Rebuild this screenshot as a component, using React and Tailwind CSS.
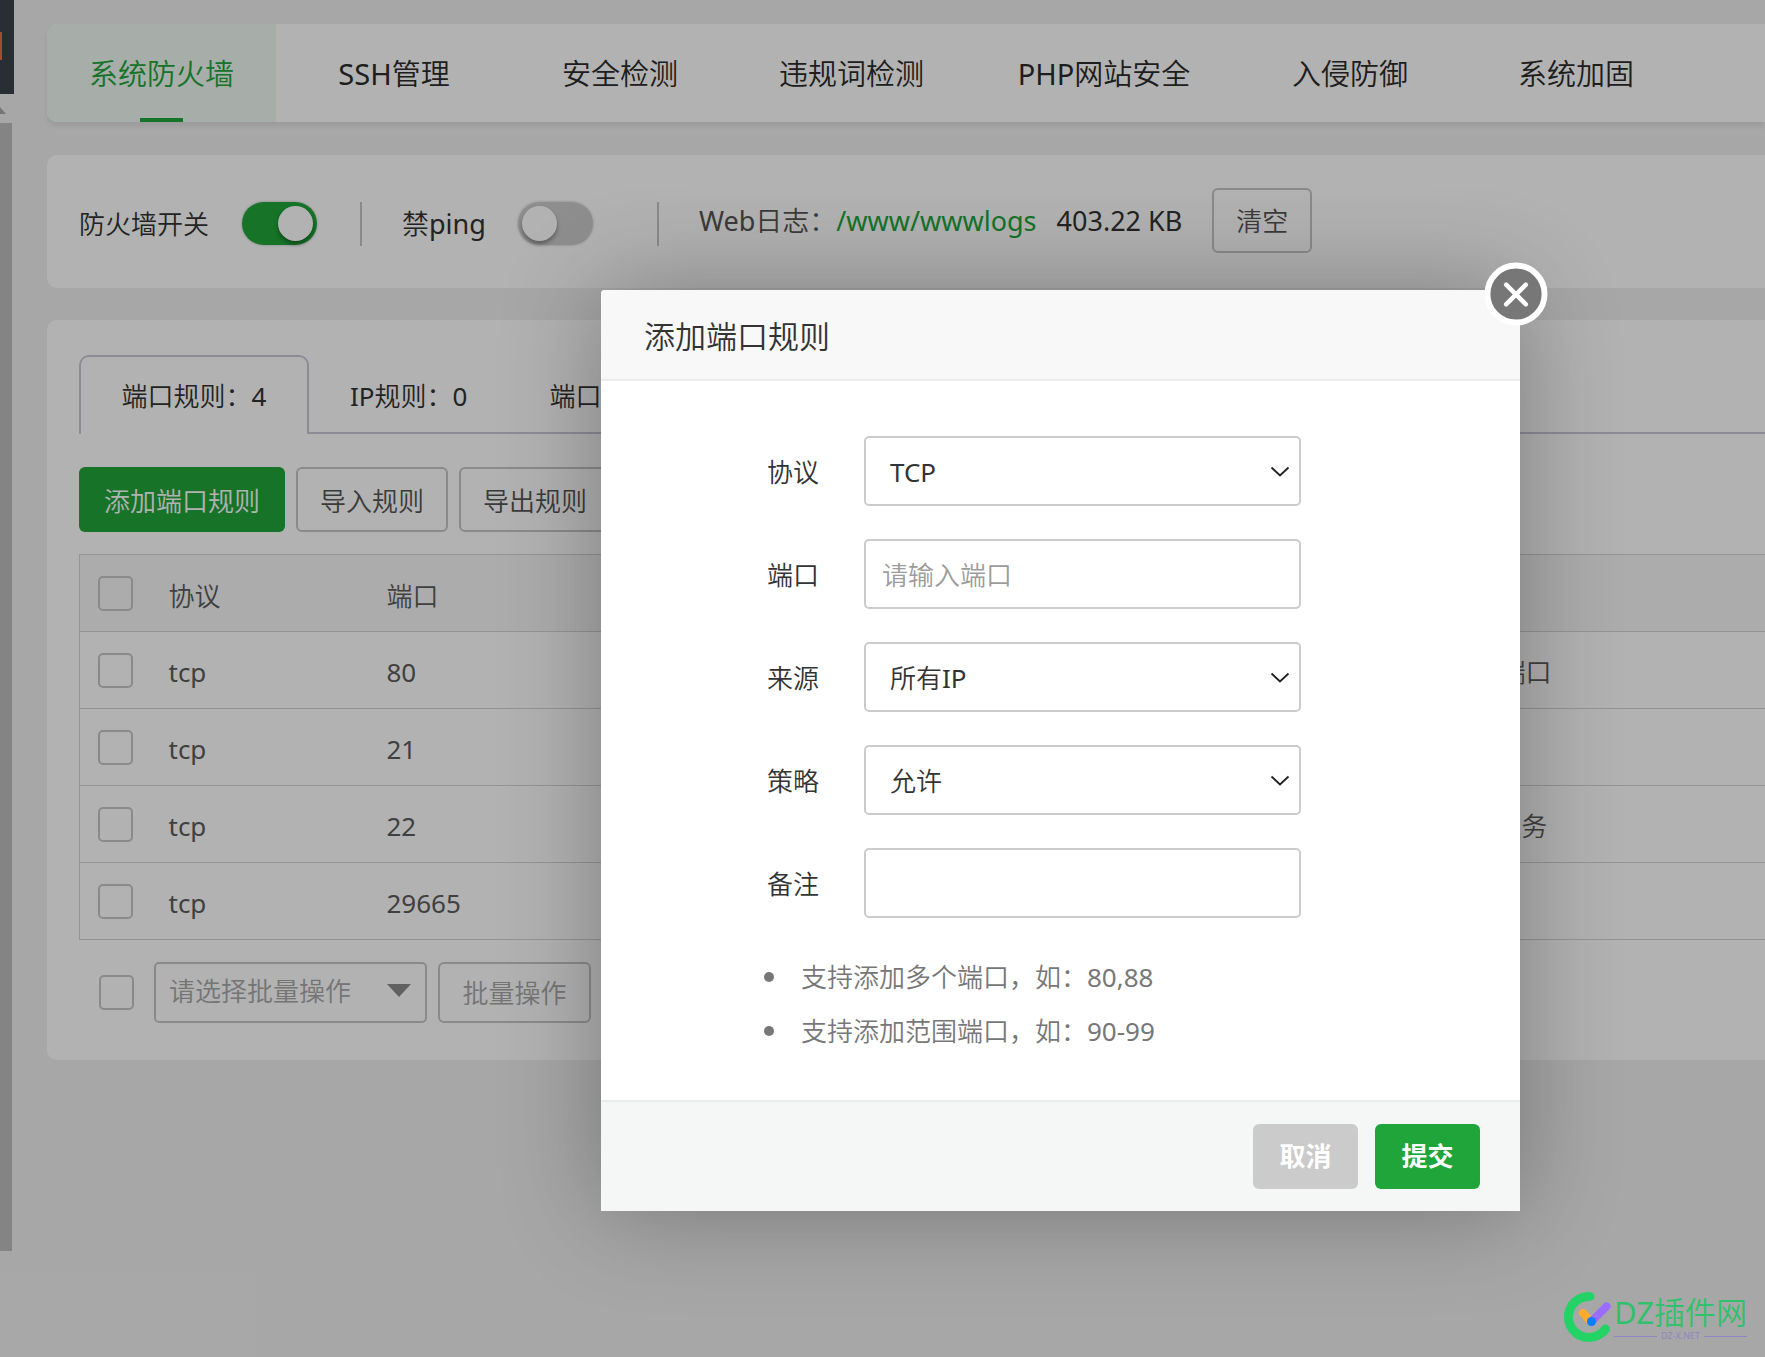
const NAV = [
  { label: "系统防火墙", width: "w-[229px]", active: true },
  { label: "SSH管理", width: "w-[236px]" },
  { label: "安全检测", width: "w-[216px]" },
  { label: "违规词检测", width: "w-[247px]" },
  { label: "PHP网站安全", width: "w-[258px]" },
  { label: "入侵防御", width: "w-[234px]" },
  { label: "系统加固", width: "w-[218px]" },
];

const RULES = [
  { protocol: "tcp", port: "80", note: "网站默认端口" },
  { protocol: "tcp", port: "21", note: "" },
  { protocol: "tcp", port: "22", note: "SSH远程服务" },
  { protocol: "tcp", port: "29665", note: "" },
];

function Sidebar() {
  return (
    <div className="flex h-[1251px] w-[14px] shrink-0 flex-col">
      <div className="flex h-[94px] items-start bg-[#3c434d] pt-8">
        <div className="h-7 w-[2px] bg-[#e8703f]" />
      </div>
      <div className="flex h-[29px] items-center pt-1">
        <svg className="h-[7px] w-[6px]" viewBox="0 0 6 7" aria-hidden="true">
          <path d="M0 0 6 7H0Z" fill="#a8a8a8" />
        </svg>
      </div>
      <div className="w-[12px] flex-1 bg-[#bebebe]" />
    </div>
  );
}

function Nav() {
  return (
    <nav className="flex h-[98px] overflow-hidden rounded-l-[10px] bg-white">
      {NAV.map((t) => (
        <a
          key={t.label}
          href="#"
          className={`flex shrink-0 flex-col items-center text-[29px] leading-[100px] ${t.width} ${
            t.active ? "bg-[#eff8f1] text-[#20a53a]" : "text-[#2b2b2b]"
          }`}
        >
          <span className="h-[94px]">{t.label}</span>
          {t.active && <span className="h-1 w-[43px] bg-[#20a53a]" />}
        </a>
      ))}
    </nav>
  );
}

function Toggle({ id, on }) {
  return (
    <input
      id={id}
      type="checkbox"
      role="switch"
      defaultChecked={on}
      className="h-[43px] w-[75px] shrink-0 appearance-none rounded-full bg-[#cccccc] p-1 shadow-[0_0_2px_1px_rgba(0,0,0,0.12)] before:block before:size-[35px] before:rounded-full before:bg-white before:shadow-[0_3px_4px_rgba(0,0,0,0.35)] before:content-[''] checked:bg-[#20a53a] checked:before:ml-8"
    />
  );
}

function OutlineButton({ children, className = "text-[#555]" }) {
  return (
    <button type="button" className={`rounded-md border-2 border-[#c6c6c6] ${className}`}>
      {children}
    </button>
  );
}

function Check({ label }) {
  return (
    <input
      type="checkbox"
      aria-label={label}
      className="block size-[35px] shrink-0 appearance-none rounded-[5px] border-2 border-[#c6c6c6]"
    />
  );
}

function StatusBar() {
  return (
    <section className="flex h-[133px] items-center overflow-hidden rounded-l-[10px] bg-white pb-[2px] pl-8 whitespace-nowrap text-[#333]">
      <div className="flex items-center pt-[6px]">
        <label htmlFor="fw">防火墙开关</label>
        <div className="ml-[33px] flex">
          <Toggle id="fw" on />
        </div>
        <span className="ml-[43px] h-11 w-[2px] bg-[#c6c6c6]" />
        <label htmlFor="ping" className="ml-10 text-[27px]">
          禁ping
        </label>
        <div className="ml-8 flex">
          <Toggle id="ping" />
        </div>
        <span className="ml-16 h-11 w-[2px] bg-[#c6c6c6]" />
      </div>
      <span className="ml-10 text-[27px] text-[#555]">Web日志：</span>
      <a href="#" className="text-[27px] text-[#20a53a]">
        /www/wwwlogs
      </a>
      <span className="ml-5 text-[27px]">403.22 KB</span>
      <OutlineButton className="ml-[30px] h-[65px] w-[100px] text-[#555]">清空</OutlineButton>
    </section>
  );
}

function Rules() {
  return (
    <section className="rounded-l-[10px] bg-white pt-[35px] pb-[37px] pl-8 whitespace-nowrap">
      <div role="tablist" className="flex h-[79px] text-[#333]">
        <button
          type="button"
          role="tab"
          aria-selected="true"
          className="w-[230px] rounded-t-[10px] border-2 border-b-0 border-[#c9c9d8]"
        >
          端口规则：4
        </button>
        <div className="flex flex-1 border-b-2 border-[#c9c9d8] pt-1 pl-[41px]">
          <button type="button" role="tab">
            IP规则：0
          </button>
          <button type="button" role="tab" className="ml-[82px]">
            端口转发：0
          </button>
        </div>
      </div>

      <div className="mt-[33px] flex h-[65px] gap-[11px]">
        <button type="button" className="w-[206px] rounded-md bg-[#20a53a] pt-[2px] text-white">
          添加端口规则
        </button>
        <OutlineButton className="w-[152px] pt-[2px] text-[#555]">导入规则</OutlineButton>
        <OutlineButton className="w-[152px] pt-[2px] text-[#555]">导出规则</OutlineButton>
      </div>

      <table className="mt-[22px] w-full table-fixed border-collapse border border-r-0 border-[#d4d4d4] text-left text-[#5c5c5c]">
        <colgroup>
          <col className="w-[89px]" />
          <col className="w-[218px]" />
          <col className="w-[1009px]" />
          <col />
        </colgroup>
        <thead>
          <tr className="h-[77px] bg-[#f6f6f6]">
            <th className="pl-[18px]">
              <Check label="全选" />
            </th>
            <th className="pt-[6px] font-normal">协议</th>
            <th className="pt-[6px] font-normal">端口</th>
            <th className="pt-[6px] font-normal">备注</th>
          </tr>
        </thead>
        <tbody>
          {RULES.map((r) => (
            <tr key={r.port} className="h-[77px] border-t border-[#d4d4d4]">
              <td className="pl-[18px]">
                <Check label={`选择 ${r.port}`} />
              </td>
              <td className="pt-1">{r.protocol}</td>
              <td className="pt-1">{r.port}</td>
              <td className="pt-1">{r.note}</td>
            </tr>
          ))}
        </tbody>
      </table>

      <div className="mt-[22px] flex h-[61px] items-center pl-5 text-[#a8a8a8]">
        <Check label="选择全部规则" />
        <div className="relative ml-5">
          <select
            aria-label="批量操作"
            className="block h-[61px] w-[273px] appearance-none rounded-[5px] border-2 border-[#c6c6c6] bg-transparent pb-[3px] pl-[13px]"
          >
            <option>请选择批量操作</option>
          </select>
          <svg
            className="pointer-events-none absolute top-[22px] right-4 h-[13px] w-6"
            viewBox="0 0 24 13"
            aria-hidden="true"
          >
            <path d="M0 0H24L12 13Z" fill="#8c8c8c" />
          </svg>
        </div>
        <OutlineButton className="ml-[11px] h-[61px] w-[153px] text-[#a8a8a8]">批量操作</OutlineButton>
      </div>
    </section>
  );
}

const FIELD =
  "block h-[70px] w-[437px] appearance-none rounded-[5px] border-2 border-[#cccccc] bg-white pt-[2px] text-[#333] outline-none placeholder:text-[#9c9c9c]";

function SelectField({ id, value }) {
  return (
    <div className="relative">
      <select id={id} className={`${FIELD} pl-6`}>
        <option>{value}</option>
      </select>
      <svg
        className="pointer-events-none absolute top-[30px] right-[11px] h-[12px] w-5"
        viewBox="0 0 20 12"
        fill="none"
        stroke="#222"
        strokeWidth="1.8"
        aria-hidden="true"
      >
        <path d="M1.5 1.5 10 9.5 18.5 1.5" />
      </svg>
    </div>
  );
}

function Field({ id, label, children }) {
  return (
    <div className="flex items-center">
      <label htmlFor={id} className="w-[263px] pt-[2px] pr-[45px] text-right">
        {label}
      </label>
      {children}
    </div>
  );
}

function Dialog() {
  return (
    <div
      role="dialog"
      aria-labelledby="dlg-title"
      className="absolute top-[290px] left-[601px] w-[919px] rounded-t-[4px] bg-white whitespace-nowrap text-[#333] shadow-[0_0_100px_rgba(0,0,0,0.3)]"
    >
      <h2
        id="dlg-title"
        className="h-[91px] rounded-t-[4px] border-b-2 border-[#ececec] bg-[#f8f8f8] pl-[43px] text-[31px] leading-[93px]"
      >
        添加端口规则
      </h2>
      <button type="button" aria-label="关闭" className="absolute -top-7 -right-7 size-[64px]">
        <svg viewBox="0 0 65 65" fill="none" aria-hidden="true">
          <circle cx="32.500" cy="32.500" r="29" fill="#777" stroke="#fff" strokeWidth="6" />
          <path d="M22.500 23 42.500 43M42.500 23 22.500 43" stroke="#fff" strokeWidth="4.500" strokeLinecap="round" />
        </svg>
      </button>

      <form className="flex flex-col gap-[33px] pt-[55px]">
        <Field id="protocol" label="协议">
          <SelectField id="protocol" value="TCP" />
        </Field>
        <Field id="port" label="端口">
          <input id="port" type="text" placeholder="请输入端口" className={`${FIELD} pl-4`} />
        </Field>
        <Field id="source" label="来源">
          <SelectField id="source" value="所有IP" />
        </Field>
        <Field id="policy" label="策略">
          <SelectField id="policy" value="允许" />
        </Field>
        <Field id="note" label="备注">
          <input id="note" type="text" className={`${FIELD} pl-4`} />
        </Field>
      </form>

      <ul className="mt-8 pb-[42px] pl-[163px] leading-[54px] text-[#777]">
        {["支持添加多个端口，如：80,88", "支持添加范围端口，如：90-99"].map((t) => (
          <li key={t} className="flex items-center">
            <span className="mr-[27px] size-[10px] rounded-full bg-[#777]" />
            {t}
          </li>
        ))}
      </ul>

      <div className="flex justify-end gap-[17px] border-t-2 border-[#e7eded] bg-[#f4f7f6] py-[22px] pr-10 font-['Noto_Sans','Noto_Sans_CJK_SC',sans-serif] font-bold text-white">
        <button type="button" className="h-[65px] w-[105px] rounded-md bg-[#cbcbcb] pb-[2px]">
          取消
        </button>
        <button type="button" className="h-[65px] w-[105px] rounded-md bg-[#20a53a] pb-[2px]">
          提交
        </button>
      </div>
    </div>
  );
}

function Watermark() {
  return (
    <div className="absolute right-[18px] bottom-[14px] flex items-center gap-[2px]">
      <svg className="h-[52px] w-12" viewBox="0 0 48 52" fill="none" strokeLinecap="round" aria-hidden="true">
        <path d="M26 5.500A20.500 20.500 0 1 0 41.500 38" stroke="#23d366" strokeWidth="9" />
        <path d="M19 22 24.500 28" stroke="#ffab2e" strokeWidth="8" />
        <path d="M42.500 15.500 29 29" stroke="#9c6bff" strokeWidth="8" />
        <circle cx="27.500" cy="30.500" r="4.500" fill="#0a7cff" />
      </svg>
      <div className="flex flex-col">
        <span className="text-[31px] leading-[38px] text-[#2fc26b]">DZ插件网</span>
        <span className="flex items-center gap-1 text-[9px] leading-[10px] text-[#8f86c4]">
          <span className="h-px flex-1 bg-[#8f86c4]" />
          DZ-X.NET
          <span className="h-px flex-1 bg-[#8f86c4]" />
        </span>
      </div>
    </div>
  );
}

export default function App() {
  return (
    <div className="relative flex min-h-screen overflow-hidden bg-[#f0f0f0] font-['Noto_Sans','Noto_Sans_CJK_SC_DemiLight','Noto_Sans_CJK_SC_Light','Noto_Sans_CJK_SC',sans-serif] text-[26px] leading-[36px]">
      <Sidebar />
      <main className="ml-[33px] flex min-w-0 flex-1 flex-col pt-6">
        <div className="rounded-l-[10px] shadow-[0_4px_6px_rgba(0,0,0,0.08)]">
          <Nav />
        </div>
        <div className="mt-[33px]">
          <StatusBar />
        </div>
        <div className="mt-8">
          <Rules />
        </div>
      </main>
      <div className="absolute inset-0 bg-black/30" />
      <Dialog />
      <Watermark />
    </div>
  );
}
